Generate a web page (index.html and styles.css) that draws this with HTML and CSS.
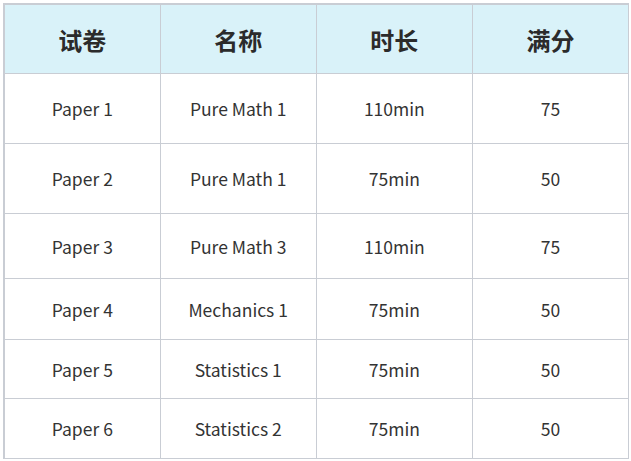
FILE: index.html
```html
<!DOCTYPE html>
<html lang="zh">
<head>
<meta charset="utf-8">
<link rel="stylesheet" href="styles.css">
</head>
<body>
<div class="wrap">
<table class="exam">
  <thead>
    <tr class="head"><th>试卷</th><th>名称</th><th>时长</th><th>满分</th></tr>
  </thead>
  <tbody>
    <tr class="r1"><td>Paper 1</td><td>Pure Math 1</td><td>110min</td><td>75</td></tr>
    <tr class="r2"><td>Paper 2</td><td>Pure Math 1</td><td>75min</td><td>50</td></tr>
    <tr class="r3"><td>Paper 3</td><td>Pure Math 3</td><td>110min</td><td>75</td></tr>
    <tr class="r4"><td>Paper 4</td><td>Mechanics 1</td><td>75min</td><td>50</td></tr>
    <tr class="r5"><td>Paper 5</td><td>Statistics 1</td><td>75min</td><td>50</td></tr>
    <tr class="r6"><td>Paper 6</td><td>Statistics 2</td><td>75min</td><td>50</td></tr>
  </tbody>
</table>
</div>
</body>
</html>
```

FILE: styles.css
```css
html, body {
  margin: 0;
  padding: 0;
  background: #ffffff;
}
.wrap {
  padding: 3px 2px 0 3px;
}
.exam {
  width: 626px;
  border-collapse: collapse;
  table-layout: fixed;
  font-family: "Noto Sans CJK SC", "Noto Sans", sans-serif;
  color: #333333;
  border-left: 2px solid #c9cdd4;
  border-top: 2px solid #c9cdd4;
}
.exam th, .exam td {
  border: 1px solid #c9cdd4;
  text-align: center;
  vertical-align: middle;
  padding: 0;
}
.exam th {
  background: #d9f2f9;
  font-size: 24px;
  font-weight: 700;
  color: #2b2b2b;
  height: 68px;
}
.exam td {
  font-size: 17.5px;
  color: #333333;
}
.r1 td { height: 69px; }
.r2 td { height: 69px; }
.r3 td { height: 64px; }
.r4 td { height: 60px; }
.r5 td { height: 58px; }
.r6 td { height: 59px; }
```
